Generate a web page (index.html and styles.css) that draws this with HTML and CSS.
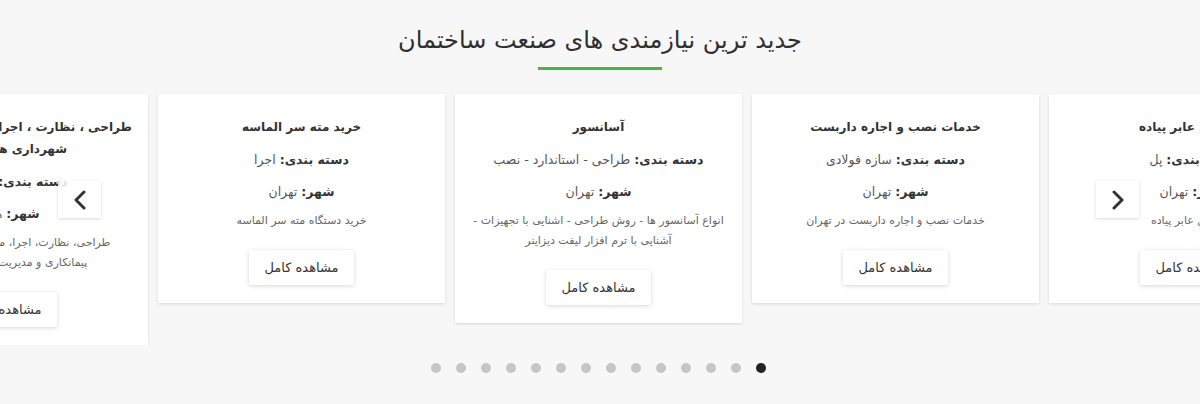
FILE: index.html
```html
<!DOCTYPE html>
<html lang="fa" dir="rtl">
<head>
    <meta charset="UTF-8">
    <meta name="viewport" content="width=device-width, initial-scale=1.0">
    <title>جدید ترین نیازمندی ها</title>
    <link rel="stylesheet" href="styles.css">
</head>
<body>
    <section class="latest">
        <h2 class="section-title">جدید ترین نیازمندی های صنعت ساختمان</h2>
        <div class="title-line"></div>

        <div class="slider">
            <div class="track">
                <div class="card">
                    <h3>طرح پل عابر پیاده</h3>
                    <p><b>دسته بندی:</b> پل</p>
                    <p><b>شهر:</b> تهران</p>
                    <p class="desc">طرح پل عابر پیاده</p>
                    <a class="more" href="#">مشاهده کامل</a>
                </div>
                <div class="card">
                    <h3>خدمات نصب و اجاره داربست</h3>
                    <p><b>دسته بندی:</b> سازه فولادی</p>
                    <p><b>شهر:</b> تهران</p>
                    <p class="desc">خدمات نصب و اجاره داربست در تهران</p>
                    <a class="more" href="#">مشاهده کامل</a>
                </div>
                <div class="card">
                    <h3>آسانسور</h3>
                    <p><b>دسته بندی:</b> طراحی - استاندارد - نصب</p>
                    <p><b>شهر:</b> تهران</p>
                    <p class="desc">انواع آسانسور ها - روش طراحی - اشنایی با تجهیزات - آشنایی با ترم افزار لیفت دیزاینر</p>
                    <a class="more" href="#">مشاهده کامل</a>
                </div>
                <div class="card">
                    <h3>خرید مته سر الماسه</h3>
                    <p><b>دسته بندی:</b> اجرا</p>
                    <p><b>شهر:</b> تهران</p>
                    <p class="desc">خرید دستگاه مته سر الماسه</p>
                    <a class="more" href="#">مشاهده کامل</a>
                </div>
                <div class="card card-wide">
                    <h3>طراحی ، نظارت ، اجرا ، مشاوره و بازرسی<br>شهرداری های همدان</h3>
                    <p><b>دسته بندی:</b> همه موارد</p>
                    <p><b>شهر:</b> همدان</p>
                    <p class="desc">طراحی، نظارت، اجرا، مشاوره و نقشه برداری<br>پیمانکاری و مدیریت پیمان ، پروژه ها</p>
                    <a class="more" href="#">مشاهده کامل</a>
                </div>
            </div>

            <button class="arrow arrow-next" type="button" aria-label="بعدی">
                <svg width="14" height="20" viewBox="0 0 14 20"><path d="M3 2l8 8-8 8" fill="none" stroke="#333" stroke-width="3" stroke-linecap="round" stroke-linejoin="round"/></svg>
            </button>
            <button class="arrow arrow-prev" type="button" aria-label="قبلی">
                <svg width="14" height="20" viewBox="0 0 14 20"><path d="M11 2l-8 8 8 8" fill="none" stroke="#333" stroke-width="3" stroke-linecap="round" stroke-linejoin="round"/></svg>
            </button>
        </div>

        <div class="dots">
            <span class="dot active"></span>
            <span class="dot"></span>
            <span class="dot"></span>
            <span class="dot"></span>
            <span class="dot"></span>
            <span class="dot"></span>
            <span class="dot"></span>
            <span class="dot"></span>
            <span class="dot"></span>
            <span class="dot"></span>
            <span class="dot"></span>
            <span class="dot"></span>
            <span class="dot"></span>
            <span class="dot"></span>
        </div>
    </section>
</body>
</html>
```

FILE: styles.css
```css
body { margin: 0; background: #f7f7f7; font-family: "DejaVu Sans", sans-serif; color: #333; overflow: hidden; }
.latest { padding-top: 22px; }
.section-title { margin: 0; font-size: 24px; line-height: 36px; font-weight: normal; color: #2f2f2f; text-align: center; }
.title-line { width: 124px; height: 3px; margin: 9px auto 0; background: #4caf50; }

.slider { position: relative; overflow: hidden; padding: 24px 0 0; }
.track { display: flex; align-items: flex-start; gap: 10px; margin-right: -136px; }
.card { flex: 0 0 287px; box-sizing: border-box; background: #fff; box-shadow: 0 1px 3px rgba(0,0,0,0.13); padding: 22px 16px 18px; text-align: center; }
.card-wide { padding-left: 10px; padding-right: 10px; }
.card h3 { margin: 0; font-size: 12px; line-height: 22px; font-weight: bold; color: #333; }
.card p { margin: 12px 0 0; font-size: 12.5px; line-height: 20px; color: #555; }
.card p b { color: #333; }
.card .desc { margin-top: 9px; font-size: 11px; color: #666; }
.more { display: inline-block; vertical-align: top; margin-top: 19px; height: 35px; line-height: 35px; padding: 0 15px; font-size: 13px; color: #333; text-decoration: none; background: #fff; border-radius: 2px; box-shadow: 0 1px 4px rgba(0,0,0,0.16); }

.arrow { position: absolute; top: 111px; width: 43px; height: 37px; border: none; background: rgba(255,255,255,0.85); box-shadow: 0 1px 3px rgba(0,0,0,0.15); display: flex; align-items: center; justify-content: center; padding: 0; cursor: pointer; }
.arrow-prev { left: 58px; }
.arrow-next { left: 1096px; }

.dots { display: flex; justify-content: center; gap: 15px; margin-top: 18px; padding-right: 4px; }
.dot { width: 10px; height: 10px; border-radius: 50%; background: #c6c6c6; }
.dot.active { background: #222; }
```
